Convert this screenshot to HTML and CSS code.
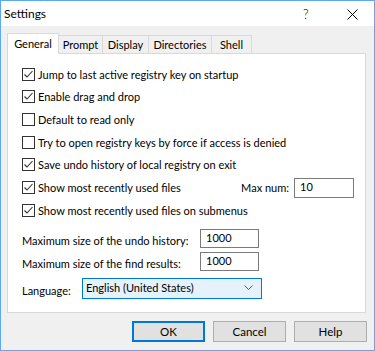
FILE: index.html
```html
<!DOCTYPE html>
<html lang="en">
<head>
  <meta charset="UTF-8" />
  <title>Settings</title>
  <link rel="stylesheet" href="styles.css">
</head>
<body>
  <div class="window">
    <div class="titlebar">
      <span class="title">Settings</span>
      <span class="help">?</span>
      <span class="close">
        <svg width="11" height="11" viewBox="0 0 11 11"><path d="M0.5 0.5 L10.5 10.5 M10.5 0.5 L0.5 10.5" stroke="#000" stroke-width="1" fill="none"/></svg>
      </span>
    </div>

    <div class="tabs">
      <div class="tab active">General</div>
      <div class="tab t-prompt">Prompt</div>
      <div class="tab t-display">Display</div>
      <div class="tab t-dirs">Directories</div>
      <div class="tab t-shell">Shell</div>
    </div>

    <div class="panel">
      <div class="check-row"><span class="box on"></span>Jump to last active registry key on startup</div>
      <div class="check-row"><span class="box on"></span>Enable drag and drop</div>
      <div class="check-row"><span class="box"></span>Default to read only</div>
      <div class="check-row"><span class="box"></span>Try to open registry keys by force if access is denied</div>
      <div class="check-row"><span class="box on"></span>Save undo history of local registry on exit</div>
      <div class="check-row">
        <span class="box on"></span>Show most recently used files
        <span class="maxnum">Max num:<span class="field small">10</span></span>
      </div>
      <div class="check-row"><span class="box on"></span>Show most recently used files on submenus</div>

      <div class="field-row first">
        <span class="label">Maximum size of the undo history:</span>
        <span class="field">1000</span>
      </div>
      <div class="field-row">
        <span class="label">Maximum size of the find results:</span>
        <span class="field">1000</span>
      </div>
      <div class="field-row lang">
        <span class="label short">Language:</span>
        <span class="select">English (United States)
          <svg class="chev" width="9" height="5" viewBox="0 0 9 5"><path d="M0.5 0.5 L4.5 4.5 L8.5 0.5" stroke="#555" stroke-width="1" fill="none"/></svg>
        </span>
      </div>
    </div>

    <div class="buttons">
      <button class="btn default">OK</button>
      <button class="btn">Cancel</button>
      <button class="btn">Help</button>
    </div>
  </div>
</body>
</html>
```

FILE: styles.css
```css
* {
  margin: 0;
  padding: 0;
  box-sizing: border-box;
}
body {
  font-family: Lato, "Liberation Sans", sans-serif;
  font-size: 11px;
  color: #000;
  background: #fff;
}

.window {
  width: 375px;
  height: 351px;
  border: 1px solid #5aa9f2;
  background: #f0f0f0;
  display: flex;
  flex-direction: column;
}

.titlebar {
  height: 25px;
  background: #fff;
  display: flex;
  align-items: center;
  position: relative;
}
.title {
  padding-left: 3px;
  font-size: 12px;
}
.help {
  position: absolute;
  left: 302px;
  top: 5px;
  font-size: 13px;
  font-weight: 300;
}
.close {
  position: absolute;
  left: 346px;
  top: 8px;
  line-height: 0;
}

.tabs {
  display: flex;
  align-items: flex-end;
  margin: 7px 0 -1px 6px;
  height: 21px;
  position: relative;
  z-index: 1;
}
.tab {
  height: 19px;
  border: 1px solid #d9d9d9;
  border-left: none;
  background: #f0f0f0;
  display: flex;
  align-items: center;
  justify-content: center;
}
.tab.active {
  height: 21px;
  width: 52px;
  border-left: 1px solid #d9d9d9;
  border-bottom: none;
  background: #fff;
  padding-bottom: 2px;
}
.t-prompt { width: 44px; }
.t-display { width: 46px; }
.t-dirs { width: 63px; }
.t-shell { width: 40px; }

.panel {
  margin: 0 8px 0 6px;
  height: 260px;
  background: #fff;
  border: 1px solid #d9d9d9;
  padding: 9px 0 0 14px;
  display: flex;
  flex-direction: column;
}

.check-row {
  height: 22.67px;
  display: flex;
  align-items: center;
  white-space: nowrap;
}
.box {
  width: 13px;
  height: 13px;
  border: 1px solid #333;
  background: #fff;
  margin-right: 3px;
  flex-shrink: 0;
}
.box.on {
  background: #fff url("data:image/svg+xml,%3Csvg xmlns='http://www.w3.org/2000/svg' width='11' height='11' viewBox='0 0 11 11'%3E%3Cpath d='M1.5 5.5 L4 8 L9.5 2' stroke='%23333' stroke-width='1.1' fill='none'/%3E%3C/svg%3E") no-repeat center;
}

.maxnum {
  margin-left: auto;
  margin-right: 11px;
  display: flex;
  align-items: center;
  gap: 5px;
}

.field {
  width: 59px;
  height: 19px;
  border: 1px solid #7a7a7a;
  background: #fff;
  padding: 0 0 2px 5px;
  display: flex;
  align-items: center;
}
.field.small {
  width: 60px;
  height: 20px;
}

.field-row {
  height: 23px;
  display: flex;
  align-items: center;
  white-space: nowrap;
}
.field-row.first {
  margin-top: 5px;
}
.field-row.lang {
  margin-top: 4px;
}
.label {
  width: 178px;
  padding-top: 5px;
}
.label.short {
  width: 60px;
}

.select {
  width: 180px;
  height: 21px;
  border: 1px solid #0078d7;
  background: #e5f1fb;
  padding: 0 0 1px 3px;
  display: flex;
  align-items: center;
}
.chev {
  margin-left: auto;
  margin-right: 8px;
}

.buttons {
  display: flex;
  justify-content: flex-end;
  gap: 8px;
  margin: 8px 7px 0 0;
}
.btn {
  width: 73px;
  height: 21px;
  border: 1px solid #adadad;
  background: #e1e1e1;
  font-family: Lato, "Liberation Sans", sans-serif;
  font-size: 11.5px;
  color: #000;
}
.btn.default {
  border: 2px solid #0078d7;
}
```
